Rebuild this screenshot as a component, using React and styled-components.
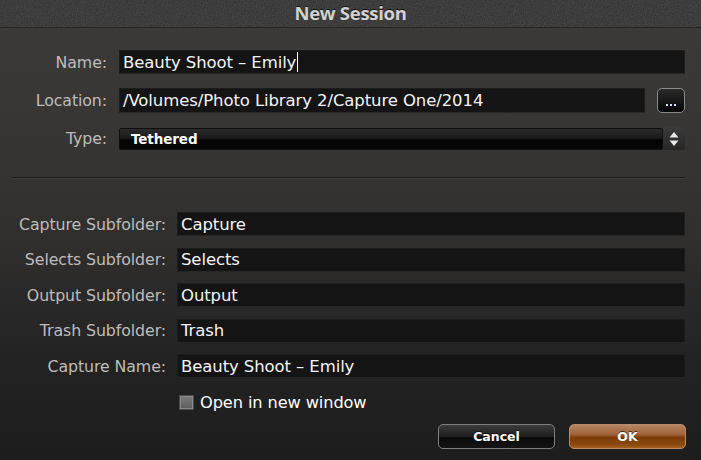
import React from "react";
import styled, { createGlobalStyle } from "styled-components";

const GlobalStyle = createGlobalStyle`
  html, body {
    margin: 0;
    padding: 0;
    background: #222;
  }
  * {
    box-sizing: border-box;
  }
`;

const Window = styled.div`
  width: 701px;
  height: 460px;
  display: flex;
  flex-direction: column;
  overflow: hidden;
  font-family: "DejaVu Sans", "Liberation Sans", sans-serif;
  background: linear-gradient(to bottom, #3c3b3a 0%, #333231 45%, #232222 80%, #1e1d1d 100%);
`;

const TitleBar = styled.div`
  position: relative;
  height: 28px;
  flex: none;
  display: flex;
  align-items: center;
  justify-content: center;
  background: #2e2d2d;
  border-bottom: 1px solid #262525;
  overflow: hidden;
`;

const Leather = styled.svg`
  position: absolute;
  inset: 0;
  width: 100%;
  height: 100%;
`;

const Title = styled.div`
  position: relative;
  font-family: "Open Sans", "DejaVu Sans", sans-serif;
  font-size: 18.5px;
  font-weight: 700;
  letter-spacing: -0.3px;
  color: #d2d2d2;
  text-shadow: 0 -1px 0 #111;
  margin-top: -3px;
`;

const Body = styled.div`
  flex: 1;
  display: flex;
  flex-direction: column;
  padding: 22px 16px 0 0;
`;

const Grid = styled.div`
  display: grid;
  grid-template-columns: ${(p) => p.$label}px 1fr;
  column-gap: ${(p) => p.$gap}px;
  row-gap: ${(p) => p.$rowGap}px;
  align-items: center;
`;

const Label = styled.div`
  text-align: right;
  font-size: 15.8px;
  color: #bdbcbb;
  white-space: nowrap;
  letter-spacing: -0.1px;
`;

const Field = styled.div`
  height: ${(p) => p.$h || 24}px;
  display: flex;
  align-items: center;
  padding-left: 3px;
  background: #141414;
  border: 1px solid #1c1c1c;
  border-bottom-color: #262626;
  color: #f4f4f4;
  font-size: 16.5px;
  letter-spacing: -0.1px;
  white-space: nowrap;
  overflow: hidden;
  flex: 1;
`;

const Caret = styled.span`
  display: inline-block;
  width: 1px;
  height: 20px;
  margin-left: 1px;
  background: #ffffff;
`;

const InlineRow = styled.div`
  display: flex;
  align-items: center;
  gap: ${(p) => p.$gap || 0}px;
`;

const BrowseButton = styled.div`
  width: 28px;
  height: 25px;
  flex: none;
  border: 1.5px solid #8a8a8a;
  border-radius: 5px;
  background: linear-gradient(to bottom, #2a2a2a, #050505);
  display: flex;
  align-items: flex-end;
  justify-content: center;
  padding-bottom: 6px;
  gap: 2px;
`;

const Dot = styled.span`
  width: 2px;
  height: 2px;
  background: #d8e0ff;
`;

const Select = styled.div`
  flex: 1;
  height: 22px;
  display: flex;
  align-items: center;
  padding-left: 11px;
  background: linear-gradient(to bottom, #2b2b2b 0%, #1a1a1a 45%, #030303 55%, #080808 100%);
  border: 1px solid #0e0e0e;
  border-radius: 2px;
  color: #ffffff;
  font-size: 13.5px;
  font-weight: bold;
  letter-spacing: -0.1px;
`;

const Stepper = styled.div`
  width: 22px;
  height: 23px;
  flex: none;
  border-radius: 0 3px 3px 0;
  background: linear-gradient(to bottom, #3a3a3a, #262626);
  display: flex;
  align-items: center;
  justify-content: center;
`;

const Divider = styled.div`
  margin: 27px 0 33px 12px;
  height: 2px;
  border-top: 1px solid #1e1d1d;
  border-bottom: 1px solid #3e3d3c;
`;

const CheckRow = styled.div`
  display: flex;
  align-items: center;
  gap: 6px;
  margin: 15px 0 0 179px;
  color: #ffffff;
  font-size: 16.2px;
  letter-spacing: -0.1px;
`;

const CheckBox = styled.span`
  width: 15px;
  height: 15px;
  background: linear-gradient(to bottom, #7a7a7a, #5e5e5e);
  border: 1px solid #4a4a4a;
  box-shadow: inset 0 0 0 1px #888;
`;

const ButtonBar = styled.div`
  display: flex;
  justify-content: flex-end;
  gap: 14px;
  margin-top: 12px;
  margin-right: -1px;
`;

const Button = styled.div`
  width: 117px;
  height: 25px;
  display: flex;
  align-items: center;
  justify-content: center;
  border-radius: 5px;
  font-size: 12.5px;
  font-weight: bold;
  color: #ffffff;
  border: 1.5px solid ${(p) => (p.$primary ? "#b98a67" : "#7e7e7e")};
  background: ${(p) =>
    p.$primary
      ? "linear-gradient(to bottom, #b58563 0%, #a0643a 40%, #7c3a08 55%, #8a4a10 85%, #a6601c 100%)"
      : "linear-gradient(to bottom, #3c3c3c 0%, #1e1e1e 50%, #0a0a0a 55%, #141414 100%)"};
  text-shadow: 0 -1px 0 rgba(0, 0, 0, 0.6);
`;

const subRows = [
  { label: "Capture Subfolder:", value: "Capture" },
  { label: "Selects Subfolder:", value: "Selects" },
  { label: "Output Subfolder:", value: "Output" },
  { label: "Trash Subfolder:", value: "Trash" },
  { label: "Capture Name:", value: "Beauty Shoot – Emily" },
];

const App = () => {
  return (
    <>
      <GlobalStyle />
      <Window>
        <TitleBar>
          <Leather>
            <filter id="grain">
              <feTurbulence type="fractalNoise" baseFrequency="0.9" numOctaves="3" seed="4" />
              <feColorMatrix
                type="matrix"
                values="0 0 0 0 0.25  0 0 0 0 0.25  0 0 0 0 0.25  0 0 0 0.35 0"
              />
            </filter>
            <rect width="100%" height="100%" filter="url(#grain)" />
          </Leather>
          <Title>New Session</Title>
        </TitleBar>

        <Body>
          {/* session basics */}
          <Grid $label={107} $gap={12} $rowGap={14}>
            <Label>Name:</Label>
            <Field>
              Beauty Shoot – Emily
              <Caret />
            </Field>
            <Label>Location:</Label>
            <InlineRow $gap={12}>
              <Field $h={25}>/Volumes/Photo Library 2/Capture One/2014</Field>
              <BrowseButton>
                <Dot />
                <Dot />
                <Dot />
              </BrowseButton>
            </InlineRow>
            <Label>Type:</Label>
            <InlineRow>
              <Select>Tethered</Select>
              <Stepper>
                <svg width="10" height="16" viewBox="0 0 10 16">
                  <path d="M5 1 L9.5 6.5 H0.5 Z" fill="#e8e8e8" />
                  <path d="M5 15 L9.5 9.5 H0.5 Z" fill="#e8e8e8" />
                </svg>
              </Stepper>
            </InlineRow>
          </Grid>

          <Divider />

          {/* subfolders */}
          <Grid $label={166} $gap={11} $rowGap={11.5}>
            {subRows.map((row) => (
              <React.Fragment key={row.label}>
                <Label>{row.label}</Label>
                <Field>{row.value}</Field>
              </React.Fragment>
            ))}
          </Grid>

          <CheckRow>
            <CheckBox />
            Open in new window
          </CheckRow>

          <ButtonBar>
            <Button>Cancel</Button>
            <Button $primary>OK</Button>
          </ButtonBar>
        </Body>
      </Window>
    </>
  );
};

export default App;
